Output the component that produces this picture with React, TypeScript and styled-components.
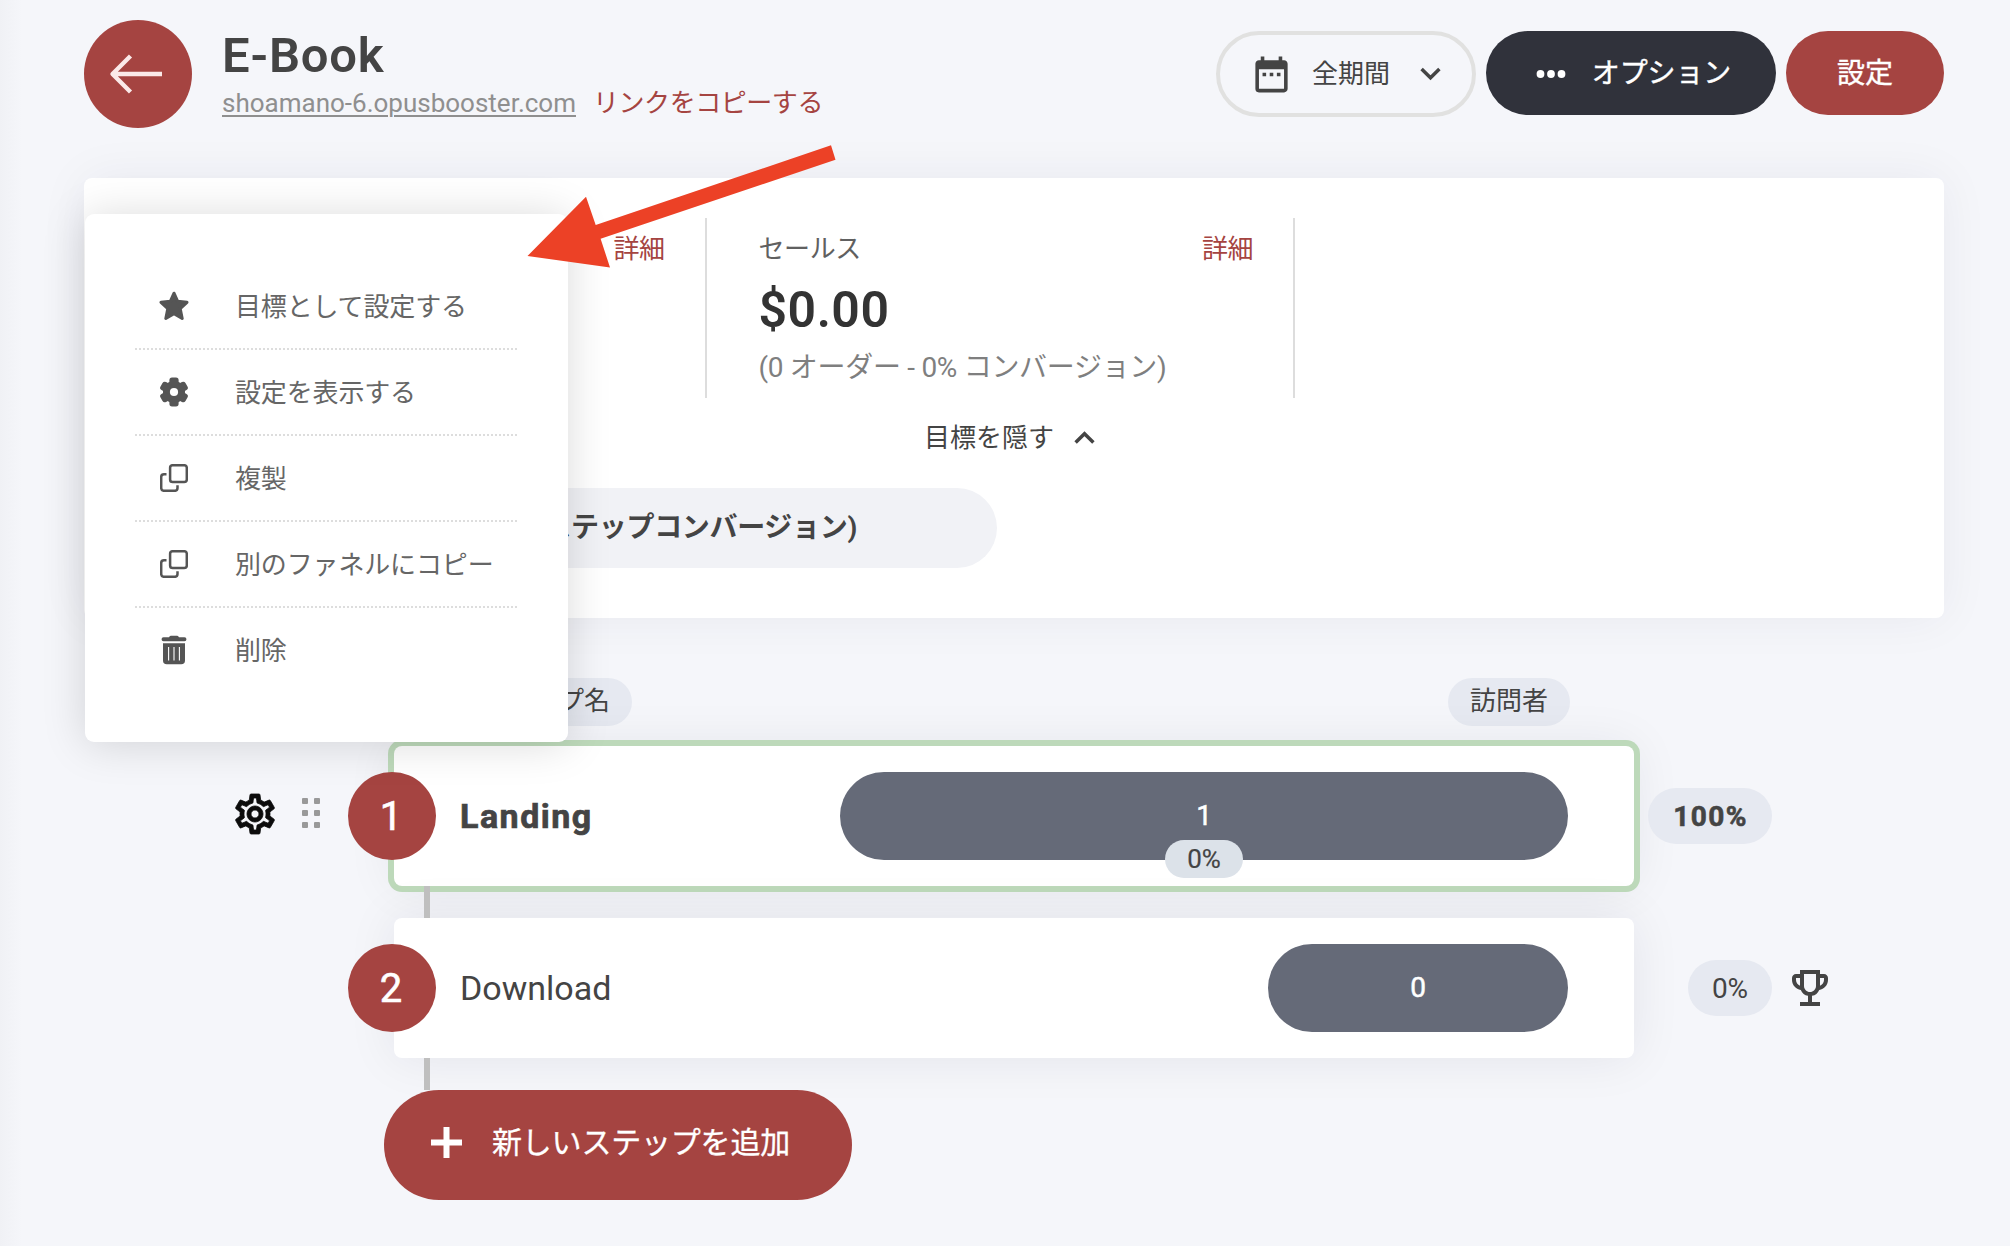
import React from "react";
import styled, { createGlobalStyle, css } from "styled-components";
import { MdDateRange, MdOutlineEmojiEvents, MdOutlineSettings } from "react-icons/md";

const red = "#a54441";
const ink = "#444444";

const Global = createGlobalStyle`
  *, *::before, *::after { box-sizing: border-box; }
  body {
    margin: 0;
    background: #f5f6fa;
    color: ${ink};
    font-family: Roboto, "Noto Sans CJK JP", sans-serif;
    font-size: 26px;
    line-height: 1;
  }
`;

const Page = styled.div`
  position: relative;
  width: 2010px;
  height: 1246px;
  overflow: hidden;
  background: linear-gradient(90deg, #f0f1f5 0, #f5f6fa 22px);
`;

const Header = styled.header`
  display: flex;
  align-items: flex-start;
  height: 178px;
  padding: 20px 66px 0 84px;
`;

const BackButton = styled.button`
  display: grid;
  place-items: center;
  width: 108px;
  height: 108px;
  padding: 0 4px 0 0;
  border: 0;
  border-radius: 50%;
  background: ${red};
`;

const TitleBlock = styled.div`
  flex: 1;
  padding: 8px 0 0 30px;
`;

const Title = styled.h1`
  margin: 0;
  height: 56px;
  line-height: 56px;
  font-size: 49px;
  font-weight: 600;
  letter-spacing: 0.7px;
`;

const LinkRow = styled.div`
  display: flex;
  align-items: center;
  gap: 17px;
  height: 38px;
  line-height: 38px;
`;

const SiteLink = styled.a`
  color: #8f8f8f;
  text-decoration: underline;
  text-underline-offset: 3px;
  text-decoration-thickness: 2px;
`;

const RedText = styled.a`
  color: ${red};
  letter-spacing: -0.45px;
  white-space: nowrap;
`;

const Actions = styled.div`
  display: flex;
  align-items: flex-start;
  gap: 10px;
  padding-top: 11px;
`;

const Button = styled.button<{ $bg: string; $w: number }>`
  display: flex;
  align-items: center;
  justify-content: center;
  gap: 26px;
  width: ${(p) => p.$w}px;
  height: 84px;
  padding: 0;
  border: 0;
  border-radius: 42px;
  background: ${(p) => p.$bg};
  color: #fff;
  font: 400 28px Roboto, "Noto Sans CJK JP", sans-serif;
  letter-spacing: -0.1px;
  -webkit-text-stroke: 0.4px #fff;
  svg { margin: 2px 0 0 5px; }
  span { padding-bottom: 4px; }
`;

const PeriodButton = styled.button`
  display: flex;
  align-items: center;
  width: 260px;
  height: 86px;
  padding: 0 31px 0 30px;
  border: 4px solid #e1e1e0;
  border-radius: 43px;
  background: transparent;
  color: ${ink};
  font: 400 26px Roboto, "Noto Sans CJK JP", sans-serif;
  span { flex: 1; padding: 0 0 5px 19px; text-align: left; }
`;

const Card = styled.section`
  width: 1860px;
  height: 440px;
  margin-left: 84px;
  padding-top: 40px;
  border-radius: 8px;
  background: #fff;
  box-shadow: 0 0 50px rgba(30, 35, 60, 0.06);
`;

const Stats = styled.div`
  display: flex;
  height: 180px;
  padding-left: 34px;
`;

const Stat = styled.div`
  display: flex;
  flex-direction: column;
  width: 588.5px;
  padding: 12px 40px 0 52px;
  border-right: 2px solid #dddddd;
`;

const StatHead = styled.div`
  display: flex;
  justify-content: space-between;
  height: 38px;
  line-height: 38px;
  color: #606060;
  letter-spacing: -0.4px;
`;

const Amount = styled.div`
  height: 81px;
  line-height: 84px;
  color: #333;
  font-size: 50px;
  font-weight: 600;
  letter-spacing: 0.5px;
`;

const Note = styled.div`
  height: 38px;
  line-height: 38px;
  color: #7f7f7f;
  font-size: 28px;
  letter-spacing: -0.3px;
`;

const GoalToggle = styled.div`
  display: flex;
  align-items: center;
  gap: 20px;
  height: 76px;
  padding: 3px 0 0 840px;
`;

const ConversionPill = styled.div`
  display: flex;
  align-items: center;
  justify-content: flex-end;
  width: 873px;
  height: 80px;
  margin: 14px 0 0 40px;
  padding: 0 140px 0 0;
  border-radius: 40px;
  background: #f1f2f6;
  font-size: 28px;
  font-weight: 700;
  letter-spacing: -0.3px;
`;

const Columns = styled.div`
  display: flex;
  justify-content: space-between;
  width: 1112px;
  height: 128px;
  margin-left: 458px;
  padding-top: 60px;
`;

const ColumnTag = styled.div`
  height: 48px;
  padding: 0 22px;
  border-radius: 24px;
  background: #e6e9f1;
  line-height: 46px;
`;

const StepRow = styled.div`
  display: flex;
  align-items: center;
  height: 140px;
  padding-left: 231px;
`;

const Tools = styled.div`
  display: flex;
  align-items: center;
  gap: 23px;
  width: 117px;
  padding-bottom: 5px;
  color: #0c0c0c;
  path:not([fill="none"]) { stroke: #0c0c0c; stroke-width: 0.4px; }
  path[fill="none"] { stroke: none; }
`;

const DragDots = styled.div`
  display: grid;
  grid-template-columns: 6px 6px;
  grid-auto-rows: 6px;
  gap: 6px;
  padding-bottom: 1px;
  i { background: #999; border-radius: 1px; }
`;

const StepNumber = styled.div`
  z-index: 1;
  flex: none;
  width: 88px;
  height: 88px;
  margin-right: -42px;
  padding-right: 2px;
  border-radius: 50%;
  background: ${red};
  color: #fff;
  font-size: 40px;
  line-height: 89px;
  text-align: center;
  -webkit-text-stroke: 0.6px #fff;
`;

const StepCard = styled.div<{ $active?: boolean }>`
  display: flex;
  align-items: center;
  justify-content: space-between;
  flex: none;
  width: 1240px;
  height: 140px;
  padding: 0 66px 0 66px;
  border-radius: 8px;
  background: #fff;
  box-shadow: ${(p) => (p.$active ? "0 0 0 6px #bdd9ba, " : "")}0 0 50px rgba(30, 30, 50, 0.08);
`;

const StepName = styled.div<{ $bold?: boolean }>`
  font-size: 34px;
  letter-spacing: 0;
  ${(p) => p.$bold && css`
    font-weight: 700;
    letter-spacing: 1.500px;
    -webkit-text-stroke: 0.7px ${ink};
  `}
`;

const Bar = styled.div<{ $w: number }>`
  position: relative;
  width: ${(p) => p.$w}px;
  height: 88px;
  border-radius: 44px;
  background: #656a78;
  color: #fff;
  font-size: 28px;
  line-height: 88px;
  text-align: center;
  -webkit-text-stroke: 0.5px #fff;
`;

const BarBadge = styled.span`
  position: absolute;
  left: 50%;
  bottom: -18px;
  width: 78px;
  height: 38px;
  margin-left: -39px;
  border-radius: 19px;
  background: #dce2e9;
  color: ${ink};
  font-size: 26px;
  line-height: 38px;
  -webkit-text-stroke: 0.2px ${ink};
`;

const Rate = styled.div<{ $bold?: boolean; $w: number }>`
  width: ${(p) => p.$w}px;
  height: 56px;
  border-radius: 28px;
  background: #e6e9f1;
  font-size: 28px;
  line-height: 57px;
  text-align: center;
  ${(p) => p.$bold && css`
    padding-left: 1px;
    font-weight: 700;
    letter-spacing: 1.400px;
    -webkit-text-stroke: 0.6px ${ink};
  `}
`;

const RateCell = styled.div`
  display: flex;
  align-items: center;
  justify-content: flex-end;
  width: 138px;
  margin-right: 14px;
`;

const Connector = styled.div`
  position: relative;
  z-index: 1;
  width: 6px;
  height: 32px;
  margin-left: 424px;
  background: #bfbfbf;
`;

const AddButton = styled.button`
  position: relative;
  z-index: 1;
  display: flex;
  align-items: center;
  gap: 30px;
  width: 468px;
  height: 110px;
  margin-left: 384px;
  padding: 0 0 5px 47px;
  border: 0;
  border-radius: 55px;
  background: ${red};
  color: #fff;
  font: 400 30px Roboto, "Noto Sans CJK JP", sans-serif;
  letter-spacing: -0.2px;
  -webkit-text-stroke: 0.3px #fff;
  span { padding-bottom: 5px; }
`;

const Menu = styled.ul`
  position: absolute;
  z-index: 5;
  left: 85px;
  top: 214px;
  width: 483px;
  height: 528px;
  margin: 0;
  padding: 50px 51px 0 50px;
  list-style: none;
  border-radius: 9px;
  background: #fff;
  box-shadow: 0 2px 44px rgba(0, 0, 0, 0.15);
`;

const MenuItem = styled.li`
  display: flex;
  align-items: center;
  height: 86px;
  padding-top: 2px;
  border-bottom: 2px dotted #dddddd;
  color: #666;
  letter-spacing: -0.15px;
  line-height: 30px;
  white-space: nowrap;
  &:last-child { border-bottom-color: transparent; }
`;

const MenuIcon = styled.span`
  display: grid;
  place-items: center;
  width: 78px;
  margin-right: 22px;
  padding-bottom: 3px;
  color: #555;
`;

const Annotation = styled.svg`
  position: absolute;
  z-index: 6;
  left: 520px;
  top: 140px;
`;

const Chevron = ({ up }: { up?: boolean }) => (
  <svg width="21" height="14" viewBox="0 0 21 14" fill="none" stroke={ink} strokeWidth="3.5">
    <path d={up ? "M1.600 11.500 10.500 2.800 19.400 11.500" : "M1.600 2 10.500 10.700 19.400 2"} />
  </svg>
);

const StarIcon = () => (
  <svg width="30" height="30" viewBox="0 0 30 30" fill="#555" stroke="#555" strokeWidth="3" strokeLinejoin="round">
    <path d="M15 2.200 18.700 10.300 28 11.300 21.200 17.600 23.200 27.500 15 22.700 6.800 27.500 8.800 17.600 2 11.300 11.300 10.300Z" />
  </svg>
);

const GearIcon = () => (
  <svg width="30" height="30" viewBox="-15 -15 30 30" fill="#555">
    <circle r="11" />
    {[0, 60, 120].map((angle) => (
      <rect key={angle} x="-4.600" y="-14.400" width="9.200" height="28.800" rx="2.600" transform={`rotate(${angle})`} />
    ))}
    <circle r="4.100" fill="#fff" />
  </svg>
);

const CopyIcon = () => (
  <svg width="28" height="28" viewBox="0 0 28 28" fill="none" stroke="#555" strokeWidth="2.500">
    <rect x="10.100" y="1.200" width="16.700" height="16.800" rx="2.600" />
    <path d="M6.500 10.200H4a2.800 2.800 0 0 0-2.800 2.800v11a2.800 2.800 0 0 0 2.800 2.800h10.700a2.800 2.800 0 0 0 2.800-2.800V21.300" />
  </svg>
);

const TrashIcon = () => (
  <svg width="26" height="30" viewBox="0 0 26 30" fill="#555">
    <path d="M8 2.300C8.600 1.200 9.600.800 10.600.800h4.800c1 0 2 .4 2.600 1.500h5.500a1.900 1.900 0 0 1 0 3.900h-21a1.900 1.900 0 0 1 0-3.900Z" />
    <path d="M2 8.200h22v17.300a3.800 3.800 0 0 1-3.800 3.800H5.800A3.800 3.800 0 0 1 2 25.500Z" />
    <path d="M7.600 12v13.500M13 12v13.500M18.400 12v13.500" stroke="#fff" strokeWidth="1.100" />
  </svg>
);

const menuItems = [
  { label: "目標として設定する", icon: <StarIcon /> },
  { label: "設定を表示する", icon: <GearIcon /> },
  { label: "複製", icon: <CopyIcon /> },
  { label: "別のファネルにコピー", icon: <CopyIcon /> },
  { label: "削除", icon: <TrashIcon /> },
];

export default function App() {
  return (
    <Page>
      <Global />
      <Header>
        <BackButton aria-label="戻る">
          <svg width="54" height="42" viewBox="0 0 54 42" fill="none" stroke="#fbe9e8" strokeWidth="4.400" strokeLinejoin="round">
            <path d="M53 21H4M21.500 3 3.500 21l18 18" />
          </svg>
        </BackButton>
        <TitleBlock>
          <Title>E-Book</Title>
          <LinkRow>
            <SiteLink>shoamano-6.opusbooster.com</SiteLink>
            <RedText>リンクをコピーする</RedText>
          </LinkRow>
        </TitleBlock>
        <Actions>
          <PeriodButton>
            <MdDateRange size={43} />
            <span>全期間</span>
            <Chevron />
          </PeriodButton>
          <Button $bg="#30323b" $w={290}>
            <svg width="30" height="8" viewBox="0 0 30 8" fill="#fff">
              <circle cx="4.500" cy="4" r="3.900" />
              <circle cx="15" cy="4" r="3.900" />
              <circle cx="25.500" cy="4" r="3.900" />
            </svg>
            <span>オプション</span>
          </Button>
          <Button $bg={red} $w={158}>
            <span>設定</span>
          </Button>
        </Actions>
      </Header>

      <Card>
        <Stats>
          <Stat>
            <StatHead>
              <span />
              <RedText>詳細</RedText>
            </StatHead>
          </Stat>
          <Stat>
            <StatHead>
              <span>セールス</span>
              <RedText>詳細</RedText>
            </StatHead>
            <Amount>$0.00</Amount>
            <Note>(0 オーダー - 0% コンバージョン)</Note>
          </Stat>
        </Stats>
        <GoalToggle>
          目標を隠す
          <Chevron up />
        </GoalToggle>
        <ConversionPill>ステップコンバージョン)</ConversionPill>
      </Card>

      <Columns>
        <ColumnTag>ステップ名</ColumnTag>
        <ColumnTag>訪問者</ColumnTag>
      </Columns>

      <StepRow>
        <Tools>
          <MdOutlineSettings size={48} />
          <DragDots>
            <i /><i /><i /><i /><i /><i />
          </DragDots>
        </Tools>
        <StepNumber>1</StepNumber>
        <StepCard $active>
          <StepName $bold>Landing</StepName>
          <Bar $w={728}>
            1<BarBadge>0%</BarBadge>
          </Bar>
        </StepCard>
        <RateCell>
          <Rate $bold $w={124}>100%</Rate>
        </RateCell>
      </StepRow>
      <Connector />
      <StepRow>
        <Tools />
        <StepNumber>2</StepNumber>
        <StepCard>
          <StepName>Download</StepName>
          <Bar $w={300}>0</Bar>
        </StepCard>
        <RateCell>
          <Rate $w={84}>0%</Rate>
        </RateCell>
        <MdOutlineEmojiEvents size={48} />
      </StepRow>
      <Connector />
      <AddButton>
        <svg width="31" height="31" viewBox="0 0 31 31" stroke="#fff" strokeWidth="6">
          <path d="M15.500 0V31M0 15.500H31" />
        </svg>
        <span>新しいステップを追加</span>
      </AddButton>

      <Menu>
        {menuItems.map((item) => (
          <MenuItem key={item.label}>
            <MenuIcon>{item.icon}</MenuIcon>
            {item.label}
          </MenuItem>
        ))}
      </Menu>
      <Annotation width="320" height="132" viewBox="520 140 320 132">
        <path fill="#ec4126" d="M527.500 256 586 196.700 595.700 225 831 145.300 835.500 159.700 600.600 238.700 610 267.500Z" />
      </Annotation>
    </Page>
  );
}
